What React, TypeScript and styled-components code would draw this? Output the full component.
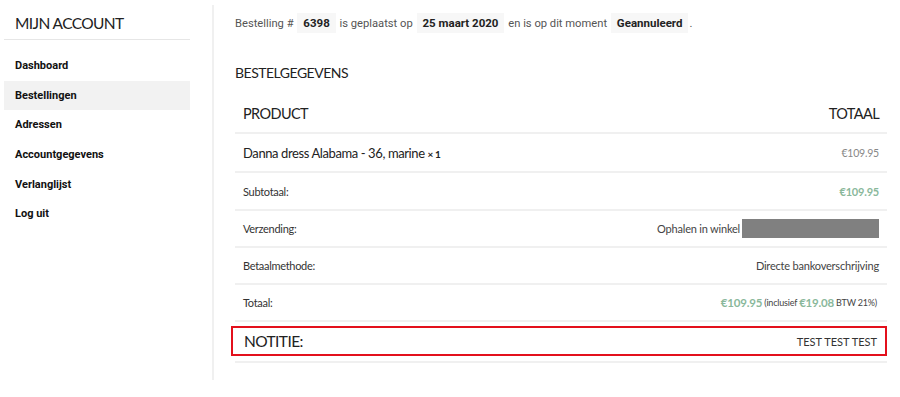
import React from 'react';
import styled, { createGlobalStyle } from 'styled-components';

const GlobalStyle = createGlobalStyle`
  body {
    margin: 0;
    background: #fff;
    font-family: Roboto, 'Liberation Sans', sans-serif;
    color: #222;
  }
`;

const Page = styled.div`
  display: flex;
  align-items: flex-start;
  width: 900px;
  height: 397px;
  box-sizing: border-box;
  padding-top: 5px;
`;

const Sidebar = styled.aside`
  width: 186px;
  margin-left: 4px;
  padding-top: 2px;
  flex-shrink: 0;
`;

const SideTitle = styled.h2`
  margin: 0;
  padding: 7px 0 7px 11px;
  font-family: Lato, 'Open Sans', sans-serif;
  font-weight: 400;
  font-size: 15.5px;
  letter-spacing: -0.6px;
  color: #222;
  border-bottom: 1px solid #e6e6e6;
`;

const NavList = styled.nav`
  display: flex;
  flex-direction: column;
  margin-top: 11px;
`;

const NavItem = styled.a<{ $active?: boolean }>`
  display: block;
  height: 29.7px;
  line-height: 29.7px;
  padding-left: 11px;
  font-size: 11px;
  font-weight: 700;
  color: #111;
  text-decoration: none;
  background: ${(p) => (p.$active ? '#f2f2f2' : 'transparent')};
`;

const Divider = styled.div`
  width: 2px;
  height: 375px;
  background: #f0f0f0;
  margin-left: 22px;
  flex-shrink: 0;
`;

const Main = styled.main`
  flex: 1;
  padding-left: 21px;
  padding-right: 13px;
`;

const Intro = styled.p`
  margin: 7px 0 0;
  font-size: 11.2px;
  color: #555;
  line-height: 22px;
`;

const Mark = styled.mark`
  background: #f7f7f7;
  color: #222;
  font-weight: 700;
  font-size: 11.5px;
  padding: 3px 6px;
  margin: 0 1px;
`;

const SectionTitle = styled.h3`
  margin: 29px 0 0;
  font-family: Lato, 'Open Sans', sans-serif;
  font-weight: 400;
  font-size: 14px;
  letter-spacing: -0.5px;
  color: #222;
`;

const Table = styled.div`
  margin-top: 14px;
  display: flex;
  flex-direction: column;
`;

const Row = styled.div<{ $h?: number }>`
  display: flex;
  align-items: center;
  justify-content: space-between;
  height: ${(p) => p.$h ?? 37}px;
  padding: 0 8px;
  box-sizing: border-box;
  border-bottom: 2px solid #f0f0f0;
  font-family: Lato, 'Open Sans', sans-serif;
  letter-spacing: -0.2px;
`;

const NoteRow = styled.div`
  display: flex;
  align-items: center;
  justify-content: space-between;
  height: 30px;
  margin: 4px 0 5px -4px;
  padding: 0 8px 0 11px;
  box-sizing: border-box;
  border: 2px solid #e3101c;
  font-family: Lato, 'Open Sans', sans-serif;
`;

const BottomLine = styled.div`
  border-bottom: 2px solid #f0f0f0;
`;

const HeadCell = styled.span`
  font-size: 14.5px;
  color: #222;
  letter-spacing: -0.6px;
`;

const ProductName = styled.span`
  font-size: 13px;
  color: #222;
  letter-spacing: -0.4px;
  b {
    font-size: 10px;
    font-weight: 700;
  }
`;

const Label = styled.span`
  font-size: 11px;
  color: #333;
  letter-spacing: -0.3px;
`;

const Value = styled.span<{ $green?: boolean; $bold?: boolean }>`
  font-size: 11px;
  color: ${(p) => (p.$green ? '#8ab89b' : '#444')};
  font-weight: ${(p) => (p.$bold ? 700 : 400)};
  display: flex;
  align-items: center;
`;

const Price = styled.span`
  font-size: 10.5px;
  color: #888;
`;

const Green = styled.b`
  color: #8ab89b;
  font-size: 11.5px;
  font-weight: 700;
`;

const Small = styled.small`
  font-size: 9px;
  color: #444;
  margin: 0 2px;
`;

const Redacted = styled.span`
  display: inline-block;
  width: 137px;
  height: 19px;
  margin-left: 2px;
  background: #808080;
`;

const NoteTitle = styled.span`
  font-size: 15.5px;
  color: #222;
  letter-spacing: -0.6px;
`;

const NoteText = styled.span`
  font-size: 11px;
  color: #333;
`;

const navItems = [
  'Dashboard',
  'Bestellingen',
  'Adressen',
  'Accountgegevens',
  'Verlanglijst',
  'Log uit',
];

function App() {
  return (
    <>
      <GlobalStyle />
      <Page>
        <Sidebar>
          <SideTitle>MIJN ACCOUNT</SideTitle>
          <NavList>
            {navItems.map((item) => (
              <NavItem key={item} href="#" $active={item === 'Bestellingen'}>
                {item}
              </NavItem>
            ))}
          </NavList>
        </Sidebar>
        <Divider />
        <Main>
          <Intro>
            Bestelling # <Mark>6398</Mark> is geplaatst op <Mark>25 maart 2020</Mark> en is op dit
            moment <Mark>Geannuleerd</Mark>.
          </Intro>
          <SectionTitle>BESTELGEGEVENS</SectionTitle>
          <Table>
            <Row $h={39}>
              <HeadCell>PRODUCT</HeadCell>
              <HeadCell>TOTAAL</HeadCell>
            </Row>
            <Row $h={39}>
              <ProductName>
                Danna dress Alabama - 36, marine <b>× 1</b>
              </ProductName>
              <Price>€109.95</Price>
            </Row>
            <Row $h={38}>
              <Label>Subtotaal:</Label>
              <Value $green $bold>€109.95</Value>
            </Row>
            <Row $h={37}>
              <Label>Verzending:</Label>
              <Value>
                Ophalen in winkel
                <Redacted />
              </Value>
            </Row>
            <Row $h={37}>
              <Label>Betaalmethode:</Label>
              <Value>Directe bankoverschrijving</Value>
            </Row>
            <Row $h={37}>
              <Label>Totaal:</Label>
              <Value>
                <Green>€109.95</Green>
                <Small>(inclusief</Small>
                <Green>€19.08</Green>
                <Small>BTW 21%)</Small>
              </Value>
            </Row>
            <NoteRow>
              <NoteTitle>NOTITIE:</NoteTitle>
              <NoteText>TEST TEST TEST</NoteText>
            </NoteRow>
            <BottomLine />
          </Table>
        </Main>
      </Page>
    </>
  );
}

export default App;
